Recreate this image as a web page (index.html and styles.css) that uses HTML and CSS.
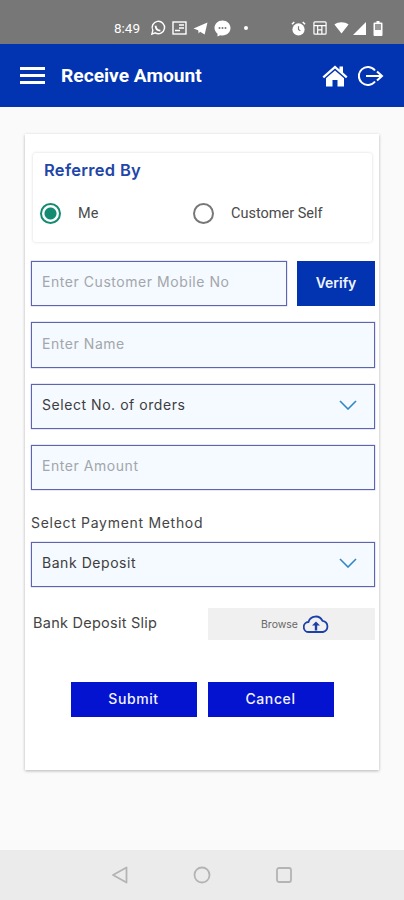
FILE: index.html
```html
<!DOCTYPE html>
<html lang="en">

<head>
  <meta charset="UTF-8">
  <meta name="viewport" content="width=device-width, initial-scale=1.0">
  <title>Receive Amount</title>
  <link rel="stylesheet" href="styles.css">
</head>

<body>
  <div class="statusbar">
    <span class="time">8:49</span>
    <div class="status-left">
      <svg width="16" height="16" viewBox="0 0 17 17" fill="none" stroke="#fff" stroke-width="1.500"><path d="M2 15l1-4a6.600 6.600 0 1 1 2.600 2.700z"/><path d="M6 6c0 3 2 5 5 5.300" stroke-width="2"/></svg>
      <svg width="15" height="14" viewBox="0 0 15 14" fill="none" stroke="#fff" stroke-width="1.400"><rect x="1" y="1" width="13" height="12"/><path d="M7 4h5M7 7h5M3 9.500h5"/></svg>
      <svg width="15" height="13" viewBox="0 0 16 14" fill="#fff"><path d="M15.500 0.500L12.500 13.500 7.500 10.500 6 12.500 5.500 9 0.500 7z"/></svg>
      <svg width="17" height="17" viewBox="0 0 17 17"><path fill="#fff" d="M8.500 0.500c4.500 0 8 3.400 8 7.600s-3.500 7.400-8 7.400c-.8 0-1.500-.1-2.200-.3l-2.800 1.300v-2.700C1.700 12.300.5 10.300.5 8.100.5 3.900 4 .5 8.500.5z"/><circle cx="5.500" cy="8" r="1" fill="#777"/><circle cx="8.500" cy="8" r="1" fill="#777"/><circle cx="11.500" cy="8" r="1" fill="#777"/></svg>
      <span class="dot"></span>
    </div>
    <div class="status-right">
      <svg width="15" height="15" viewBox="0 0 16 16"><circle cx="8" cy="9" r="6.500" fill="#fff"/><path d="M8 5.500V9l2 1.500" fill="none" stroke="#777" stroke-width="1.200"/><path d="M1 3.500L3.500 1M15 3.500L12.500 1" stroke="#fff" stroke-width="1.600"/></svg>
      <svg width="14" height="14" viewBox="0 0 15 15" fill="none" stroke="#fff" stroke-width="1.300"><rect x="1" y="1" width="13" height="13" rx="1"/><path d="M1 5h13M5 5v9M9.500 5v9M5 9.500h4.500"/></svg>
      <svg width="15" height="12" viewBox="0 0 17 13" fill="#fff"><path d="M0.500 2.500C5 -0.800 12 -0.800 16.500 2.500L8.500 12.800z"/></svg>
      <svg width="13" height="13" viewBox="0 0 13 13" fill="#fff"><path d="M13 0v13H0z"/></svg>
      <svg class="battery" width="10" height="15" viewBox="0 0 10 15"><path d="M3.500 0h3v1.500h2a1 1 0 0 1 1 1V14a1 1 0 0 1-1 1h-7a1 1 0 0 1-1-1V2.500a1 1 0 0 1 1-1h2z" fill="#fff"/><rect x="2" y="3" width="6" height="6" fill="#999"/></svg>
    </div>
  </div>

  <div class="header">
    <div class="burger"><span></span><span></span><span></span></div>
    <div class="title">Receive Amount</div>
    <div class="spacer"></div>
    <svg class="home" width="26" height="22" viewBox="0 0 26 22" fill="#fff">
      <path d="M13 0.500L0.500 11.500 2 13.200 13 3.600 24 13.200 25.500 11.500 21 7.500V1.500H17.500V4.500z"/>
      <path d="M13 5.500L4 13.300V21.500H10.500V15H15.500V21.500H22V13.300z"/>
    </svg>
    <svg class="logout" width="26" height="22" viewBox="0 0 26 22" fill="none" stroke="#fff" stroke-width="2">
      <path d="M17 5.500A9 9 0 1 0 17 16.500"/>
      <path d="M8 11H23M19 6.500L24 11 19 15.500"/>
    </svg>
  </div>

  <div class="content">
    <div class="card">
      <div class="referred">
        <div class="referred-title">Referred By</div>
        <div class="radios">
          <div class="radio-item">
            <span class="radio checked"></span>
            <span class="radio-label">Me</span>
          </div>
          <div class="radio-item">
            <span class="radio"></span>
            <span class="radio-label">Customer Self</span>
          </div>
        </div>
      </div>

      <div class="mobile-row">
        <div class="field grow placeholder">Enter Customer Mobile No</div>
        <div class="verify">Verify</div>
      </div>
      <div class="field placeholder">Enter Name</div>
      <div class="field select">
        <span>Select No. of orders</span>
        <svg width="18" height="10" viewBox="0 0 18 10" fill="none" stroke="#2f86c9" stroke-width="1.600"><path d="M1 1l8 8 8-8"/></svg>
      </div>
      <div class="field placeholder">Enter Amount</div>

      <div class="method-label">Select Payment Method</div>
      <div class="field select">
        <span>Bank Deposit</span>
        <svg width="18" height="10" viewBox="0 0 18 10" fill="none" stroke="#2f86c9" stroke-width="1.600"><path d="M1 1l8 8 8-8"/></svg>
      </div>

      <div class="slip-row">
        <div class="slip-label">Bank Deposit Slip</div>
        <div class="browse">
          <span>Browse</span>
          <svg width="26" height="18" viewBox="0 0 26 18" fill="none" stroke="#1c3fa8" stroke-width="1.800">
            <path d="M7 17H6A5 5 0 0 1 5.500 7 7.500 7.500 0 0 1 19.500 5.800 5.700 5.700 0 0 1 20 17Z"/>
            <path d="M13 15.500V9" stroke-width="2.400"/>
            <path d="M9 10.500L13 6.500 17 10.500Z" fill="#1c3fa8" stroke="none"/>
          </svg>
        </div>
      </div>

      <div class="actions">
        <div class="btn">Submit</div>
        <div class="btn">Cancel</div>
      </div>
    </div>
  </div>

  <div class="navbar">
    <svg width="18" height="18" viewBox="0 0 18 18" fill="none" stroke="#b4b4b4" stroke-width="1.800"><path d="M15.500 1.500V16.500L2 9z" stroke-linejoin="round"/></svg>
    <svg width="18" height="18" viewBox="0 0 18 18" fill="none" stroke="#b4b4b4" stroke-width="1.800"><circle cx="9" cy="9" r="7.500"/></svg>
    <svg width="18" height="18" viewBox="0 0 18 18" fill="none" stroke="#b4b4b4" stroke-width="1.800"><rect x="2" y="2" width="14" height="14" rx="2"/></svg>
  </div>
</body>

</html>
```

FILE: styles.css
```css
html,
body {
  margin: 0;
  padding: 0;
}

body {
  width: 404px;
  height: 900px;
  display: flex;
  flex-direction: column;
  background-color: #fafafa;
  font-family: Inter, Lato, sans-serif;
  color: #3a3a3a;
  overflow: hidden;
}

.statusbar {
  height: 44px;
  flex-shrink: 0;
  background-color: #777;
  display: flex;
  align-items: center;
  padding: 12px 0 0 114px;
  box-sizing: border-box;
  color: #fff;
}

.time {
  font-family: Roboto, sans-serif;
  font-size: 13.500px;
  width: 36px;
}

.status-left,
.status-right {
  display: flex;
  align-items: center;
  gap: 6px;
}

.status-right {
  margin-left: 43px;
  gap: 7px;
}

.status-right svg:nth-child(4) {
  margin-left: -3px;
}

.dot {
  width: 4px;
  height: 4px;
  border-radius: 50%;
  background-color: #fff;
  margin-left: 7px;
}

.header {
  height: 63px;
  flex-shrink: 0;
  background-color: #0233b0;
  display: flex;
  align-items: center;
  padding: 0 20px;
  box-sizing: border-box;
}

.burger {
  display: flex;
  flex-direction: column;
  gap: 4px;
  width: 25px;
}

.burger span {
  height: 3px;
  background-color: #fff;
}

.title {
  font-family: Roboto, sans-serif;
  font-weight: 700;
  font-size: 19.200px;
  color: #fff;
  margin-left: 16px;
}

.spacer {
  flex-grow: 1;
}

.home {
  margin-right: 10px;
}

.content {
  flex-grow: 1;
  padding: 27px 25px 0;
}

.card {
  height: 636px;
  box-sizing: border-box;
  background-color: #fff;
  box-shadow: 0 1px 3px rgba(0, 0, 0, 0.28);
  padding: 19px 4px 0 6px;
  display: flex;
  flex-direction: column;
  gap: 16px;
}

.referred {
  height: 89px;
  box-sizing: border-box;
  margin: 0 3px 3px 2px;
  padding: 7px 11px 0 7px;
  border-radius: 3px;
  box-shadow: 0 0 3px rgba(0, 0, 0, 0.16);
}

.referred-title {
  font-size: 16.500px;
  font-weight: 600;
  letter-spacing: 0.3px;
  color: #2145a8;
  padding-left: 4px;
}

.radios {
  display: flex;
  margin-top: 23px;
}

.radio-item {
  display: flex;
  align-items: center;
  width: 153px;
  font-family: Roboto, sans-serif;
  font-size: 14.500px;
  color: #4a4a4a;
}

.radio {
  width: 21px;
  height: 21px;
  box-sizing: border-box;
  border: 2px solid #777;
  border-radius: 50%;
  margin-right: 17px;
  flex-shrink: 0;
}

.radio.checked {
  border-color: #158a72;
  background: radial-gradient(circle, #158a72 0 5.500px, #fff 6.500px);
}

.field {
  height: 45px;
  box-sizing: border-box;
  flex-shrink: 0;
  background-color: #f4faff;
  border: 1px solid #5c66b0;
  box-shadow: 0 0 1px #6a74b8;
  padding: 0 17px 4px 10px;
  display: flex;
  align-items: center;
  font-size: 14px;
  letter-spacing: 0.55px;
  color: #3d3d3d;
}

.field.select {
  justify-content: space-between;
}

.field svg {
  margin-top: 1px;
}

.placeholder {
  color: #a3a6aa;
}

.mobile-row {
  display: flex;
  gap: 10px;
  height: 45px;
}

.grow {
  flex-grow: 1;
}

.mobile-row + .field {
  height: 46px;
}

.verify {
  width: 78px;
  flex-shrink: 0;
  background-color: #0233b0;
  color: #f0f4ff;
  font-weight: 600;
  font-size: 14px;
  padding-bottom: 3px;
  box-sizing: border-box;
  display: flex;
  align-items: center;
  justify-content: center;
}

.method-label {
  font-size: 14px;
  letter-spacing: 0.7px;
  color: #444;
  margin: 7px 0 -6px;
  line-height: 19px;
}

.slip-row {
  display: flex;
  align-items: center;
  justify-content: space-between;
  height: 32px;
  margin-top: 5px;
}

.slip-label {
  font-size: 14.500px;
  letter-spacing: 0.25px;
  color: #444;
  padding-left: 2px;
  padding-bottom: 4px;
}

.browse {
  width: 167px;
  height: 32px;
  background-color: #f0f0f0;
  display: flex;
  align-items: center;
  justify-content: center;
  gap: 5px;
  padding-left: 7px;
  box-sizing: border-box;
  font-size: 10.500px;
  color: #666;
}

.actions {
  display: flex;
  justify-content: center;
  gap: 11px;
  margin-top: 26px;
  padding-right: 2px;
}

.btn {
  width: 126px;
  height: 35px;
  background-color: #0313cf;
  color: #f2f2ff;
  font-size: 14px;
  font-weight: 500;
  letter-spacing: 0.6px;
  padding-bottom: 2px;
  box-sizing: border-box;
  display: flex;
  align-items: center;
  justify-content: center;
}

.navbar {
  height: 50px;
  flex-shrink: 0;
  background-color: #ebebeb;
  display: flex;
  align-items: center;
  justify-content: center;
  gap: 64px;
}
```
